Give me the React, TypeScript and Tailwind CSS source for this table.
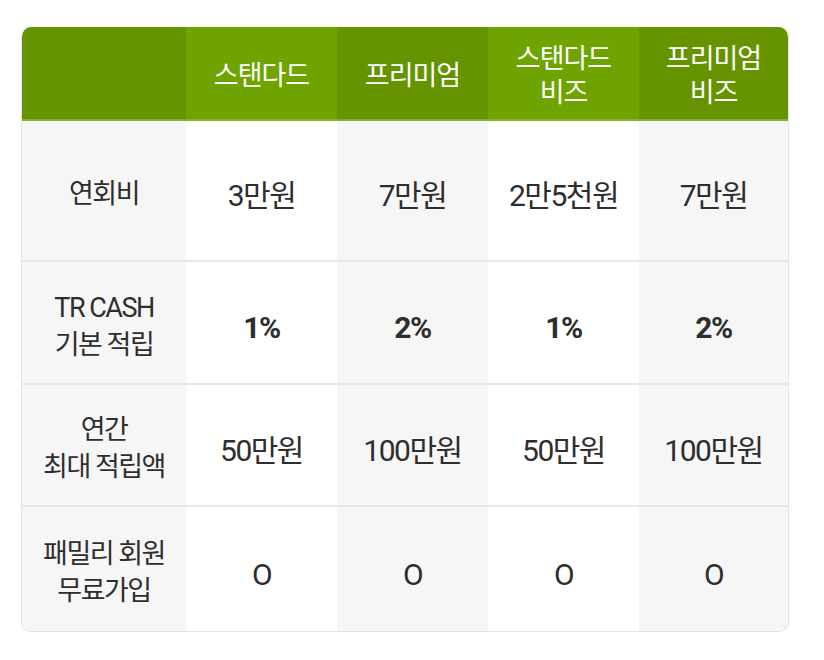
import React from "react";

const headers = ["", "스탠다드", "프리미엄", "스탠다드\n비즈", "프리미엄\n비즈"];

const rows = [
  { label: "연회비", values: ["3만원", "7만원", "2만5천원", "7만원"], h: "h-[141px]", bold: false },
  { label: "TR CASH\n기본 적립", values: ["1%", "2%", "1%", "2%"], h: "h-[123px]", bold: true },
  { label: "연간\n최대 적립액", values: ["50만원", "100만원", "50만원", "100만원"], h: "h-[122px]", bold: false },
  { label: "패밀리 회원\n무료가입", values: ["O", "O", "O", "O"], h: "h-[124px]", bold: false },
];

const cols = "grid grid-cols-[164px_151px_151px_151px_149px]";

const App = () => {
  return (
    <div
      className="w-[824px] h-[660px] bg-white pt-[27px] pl-[21px]"
      style={{ fontFamily: '"Roboto", "Noto Sans CJK KR", sans-serif' }}>
      <div className="w-[768px] rounded-[10px] overflow-hidden border border-t-0 border-[#e2e2e2]">
        <div className={`${cols} h-[94px] border-b-2 border-[#80b22c]`}>
          {headers.map((h, i) => (
            <div
              key={i}
              className={`flex items-center justify-center pt-[6px] text-center whitespace-pre-line text-white text-[27px] leading-[34px] tracking-[-1px] ${
                i % 2 === 1 ? "bg-[#6fa300]" : "bg-[#669400]"
              }`}>
              {h}
            </div>
          ))}
        </div>
        {rows.map((row, r) => (
          <div
            key={r}
            className={`${cols} ${row.h} ${r < rows.length - 1 ? "border-b-2 border-[#e7e7e7]" : ""}`}>
            <div className="flex items-center justify-center pt-[8px] text-center whitespace-pre-line bg-[#f6f6f6] text-[#2e2e2e] text-[27px] leading-[37px] tracking-[-1.5px]">
              {row.label}
            </div>
            {row.values.map((v, i) => (
              <div
                key={i}
                className={`flex items-center justify-center pt-[10px] text-[#2e2e2e] text-[30px] tracking-[-1.5px] ${
                  row.bold ? "font-bold" : "font-normal"
                } ${i % 2 === 0 ? "bg-white" : "bg-[#f6f6f6]"}`}>
                {v}
              </div>
            ))}
          </div>
        ))}
      </div>
    </div>
  );
};

export default App;
